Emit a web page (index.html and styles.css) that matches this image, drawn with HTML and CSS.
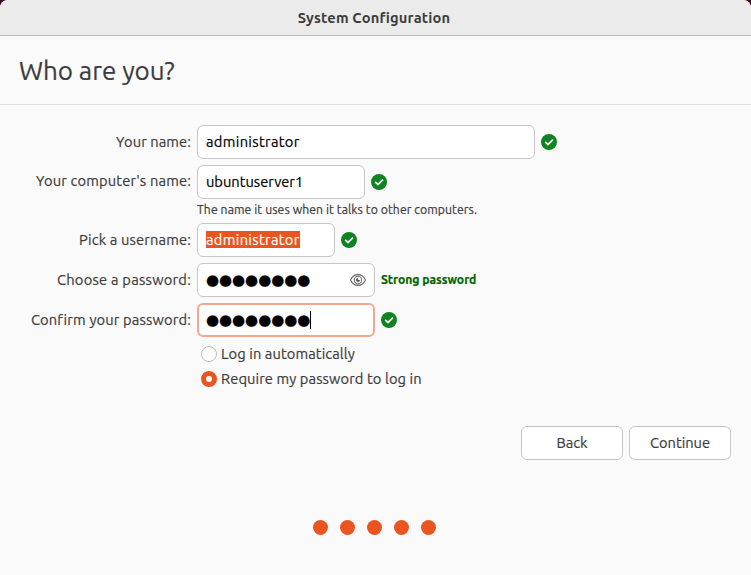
FILE: index.html
```html
<!DOCTYPE html>
<html lang="en">
<head>
<meta charset="utf-8">
<title>System Configuration</title>
<link rel="stylesheet" href="styles.css">
</head>
<body>
<svg class="defs" width="0" height="0" aria-hidden="true">
  <symbol id="ok" viewBox="0 0 16 16">
    <circle cx="8" cy="8" r="8" fill="#0e8420"/>
    <path d="M4.200 7.900 7 10.500l4.900-4.900" fill="none" stroke="#fff" stroke-width="1.700"/>
  </symbol>
  <symbol id="eye" viewBox="0 0 16 16">
    <path d="M.6 8C2 4.600 4.800 2.600 8 2.600S14 4.600 15.400 8C14 11.400 11.200 13.400 8 13.400S2 11.400.6 8Z" fill="none" stroke="#666" stroke-width="1.100"/>
    <circle cx="8" cy="8" r="3.700" fill="none" stroke="#666" stroke-width="1.100"/>
    <path d="M8 6v2h2a2 2 0 1 1-2-2Z" fill="#555"/>
  </symbol>
</svg>
<div class="window">
  <header class="titlebar"><span>System Configuration</span></header>
  <h1 class="heading">Who are you?</h1>
  <form class="form">
    <div class="row">
      <label class="label l-name">Your name:</label>
      <div class="field w-name"><span class="t-admin">administrator</span></div>
      <svg class="ok"><use href="#ok"/></svg>
    </div>
    <div class="row">
      <label class="label l-computer">Your computer's name:</label>
      <div class="field w-computer"><span class="t-host">ubuntuserver1</span></div>
      <svg class="ok"><use href="#ok"/></svg>
    </div>
    <p class="hint">The name it uses when it talks to other computers.</p>
    <div class="row">
      <label class="label l-user">Pick a username:</label>
      <div class="field w-user"><span class="t-admin selected">administrator</span></div>
      <svg class="ok"><use href="#ok"/></svg>
    </div>
    <div class="row">
      <label class="label l-pass">Choose a password:</label>
      <div class="field w-pass"><span class="bullets">●●●●●●●●</span><svg class="eye"><use href="#eye"/></svg></div>
      <span class="strength">Strong password</span>
    </div>
    <div class="row">
      <label class="label l-confirm">Confirm your password:</label>
      <div class="field w-pass focused"><span class="bullets">●●●●●●●●</span><i class="caret"></i></div>
      <svg class="ok"><use href="#ok"/></svg>
    </div>
    <div class="options">
      <div class="option"><i class="radio"></i><span class="t-auto">Log in automatically</span></div>
      <div class="option"><i class="radio checked"></i><span class="t-require">Require my password to log in</span></div>
    </div>
  </form>
  <div class="actions">
    <button class="button" type="button">Back</button>
    <button class="button" type="button">Continue</button>
  </div>
  <div class="steps"><i></i><i></i><i></i><i></i><i></i></div>
</div>
</body>
</html>
```
FILE: styles.css
```css
* { box-sizing: border-box; }
body { margin: 0; background: #3c0726; font: 14.667px/20px "Ubuntu", "Noto Sans", sans-serif; color: #3d3d3d; -webkit-text-stroke: .2px; }
.defs { display: block; }
span, .label, .hint { white-space: nowrap; }
.window { width: 751px; height: 575px; background: #fafafa; border-radius: 8px 8px 0 0; overflow: hidden; }
.titlebar { height: 36px; background: #ebebeb; border-bottom: 1px solid #bababa; display: flex; align-items: center; justify-content: center; font-weight: 700; padding-right: 3px; letter-spacing: .15px; -webkit-text-stroke: 0; }
.heading { margin: 0; height: 69px; border-bottom: 1px solid #dfdfdf; display: flex; align-items: center; padding: 2px 0 0 19px; font-size: 26px; font-weight: 400; letter-spacing: -.05px; }
.form { padding-top: 20px; display: flex; flex-direction: column; }
.row { display: flex; align-items: center; height: 34px; margin-bottom: 6px; }
.label { width: 191px; margin-right: 6px; text-align: right; }
.l-name { letter-spacing: .1px; }
.l-computer { letter-spacing: .17px; padding-bottom: 2px; }
.l-user { letter-spacing: .16px; }
.l-pass { letter-spacing: .24px; }
.l-confirm { letter-spacing: .16px; }
.field { height: 34px; background: #fff; border: 1px solid #c6c6c6; border-radius: 6px; color: #000; display: flex; align-items: center; padding: 0 8px; margin-right: 6px; }
.focused { border: 2px solid #f4a78f; padding: 0 7px; }
.w-name { width: 338px; }
.w-computer { width: 168px; }
.w-user { width: 138px; }
.w-pass { width: 178px; }
.t-admin { letter-spacing: .33px; }
.ok { width: 16px; height: 16px; }
.eye { width: 16px; height: 16px; margin-left: auto; }
.hint { margin: -4px 0 5px 197px; height: 17px; font-size: 12.200px; line-height: 17px; letter-spacing: .09px; }
.selected { background: #e95420; color: #fff; height: 17px; line-height: 18px; margin-bottom: 1px; }
.bullets { font: 15px/20px "DejaVu Sans", sans-serif; letter-spacing: -.05px; }
.caret { width: 1px; height: 18px; background: #000; }
.strength { color: #006400; font-size: 12.200px; font-weight: 700; letter-spacing: -.05px; }
.options { margin: 1px 0 0 201px; display: flex; flex-direction: column; gap: 5px; }
.option { display: flex; align-items: center; height: 20px; gap: 4px; }
.t-auto, .t-require { letter-spacing: .1px; }
.radio { width: 16px; height: 16px; border: 1px solid #bcbcbc; border-radius: 50%; background: #fff; }
.checked { border: 5.500px solid #e95420; }
.actions { display: flex; justify-content: flex-end; gap: 6px; padding: 37px 20px 0 0; }
.button { width: 102px; height: 34px; padding: 0; background: #fff; border: 1px solid #c6c6c6; border-radius: 6px; font: inherit; color: inherit; }
.steps { display: flex; justify-content: center; gap: 12px; padding: 60px 2px 0 0; }
.steps i { width: 15px; height: 15px; border-radius: 50%; background: #e95420; }
```
